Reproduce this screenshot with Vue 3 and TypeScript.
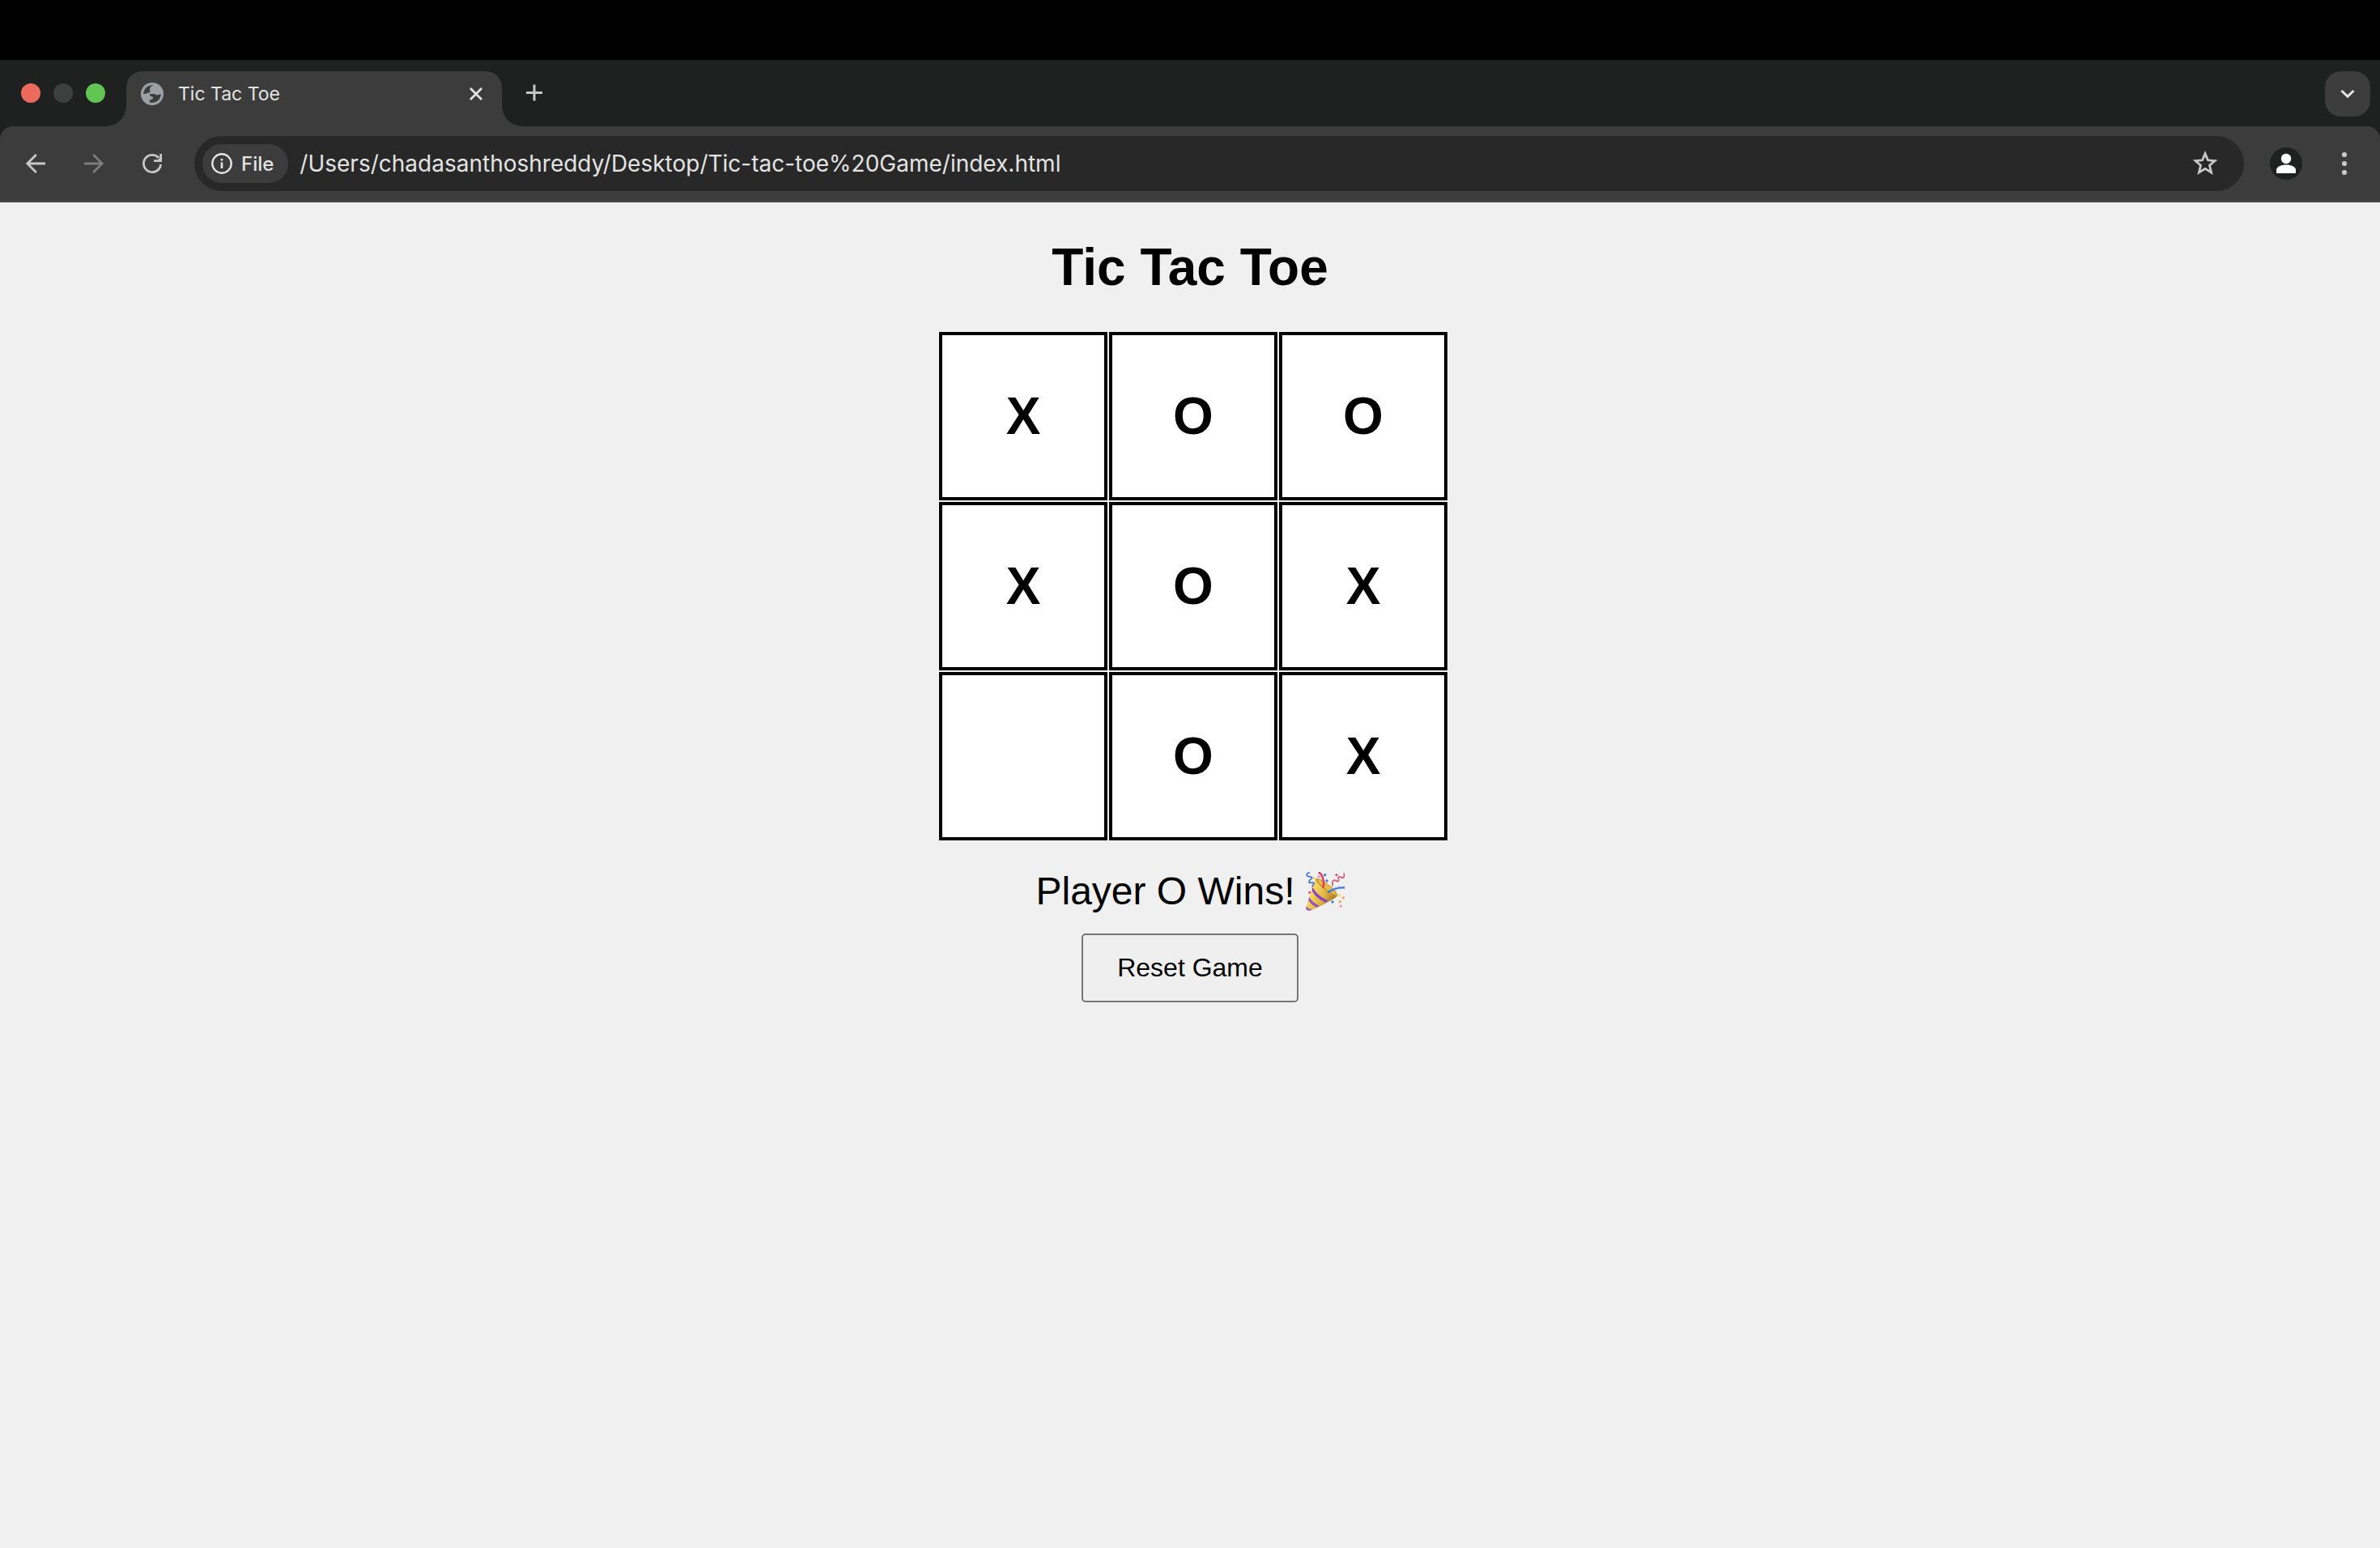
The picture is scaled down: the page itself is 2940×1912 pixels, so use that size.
<script setup lang="ts">
import { computed, ref } from 'vue'

type Mark = 'X' | 'O' | ''

const lines: number[][] = [
  [0, 1, 2], [3, 4, 5], [6, 7, 8],
  [0, 3, 6], [1, 4, 7], [2, 5, 8],
  [0, 4, 8], [2, 4, 6],
]

const address = ref('/Users/chadasanthoshreddy/Desktop/Tic-tac-toe%20Game/index.html')
const cells = ref<Mark[]>(['X', 'O', 'O', 'X', 'O', 'X', '', 'O', 'X'])
const turn = ref<'X' | 'O'>('X')

const winner = computed<Mark>(() => {
  for (const [a, b, c] of lines) {
    const mark = cells.value[a]
    if (mark && mark === cells.value[b] && mark === cells.value[c]) return mark
  }
  return ''
})

const status = computed(() => {
  if (winner.value) return `Player ${winner.value} Wins!`
  if (cells.value.every((c) => c)) return "It's a Draw!"
  return `Player ${turn.value}'s Turn`
})

function play(i: number) {
  if (cells.value[i] || winner.value) return
  cells.value[i] = turn.value
  turn.value = turn.value === 'X' ? 'O' : 'X'
}

function reset() {
  cells.value = Array<Mark>(9).fill('')
  turn.value = 'X'
}
</script>

<template>
  <div class="screen">
    <div class="menubar"></div>
    <header class="chrome">
      <div class="strip">
        <div class="lights">
          <button class="light close" aria-label="Close window"></button>
          <button class="light minimise" aria-label="Minimise window"></button>
          <button class="light zoom" aria-label="Zoom window"></button>
        </div>
        <div class="tab">
          <svg class="favicon" viewBox="0 0 28 28" aria-hidden="true">
            <circle cx="14" cy="14" r="14" fill="#9aa0a6" />
            <path fill="#3c3c3c" d="M16 3.300 C14 3.600 11.200 5.500 11 8 C10.700 10 12 10.600 11.400 11.700 C10.800 12.700 9 12 8 13 C7 13.800 5.500 14 3.200 14 C3.200 8 8 2.500 16 3.300Z" />
            <path fill="#3c3c3c" d="M11 14 H15 C18.500 14 19 15.800 20.300 15.500 C22 15 23 14.500 24.800 14.500 C24.500 20 20 24.800 14 24.800 C12.500 24.800 11.500 24.500 10.800 24.200 V21.500 C12.500 21 14.500 21 15 19 C15.500 17 12.500 17.500 11 16Z" />
          </svg>
          <span class="tab-title">Tic Tac Toe</span>
          <button class="icon small" aria-label="Close tab">
            <svg viewBox="0 0 32 32"><path d="M9 9 L23 23 M23 9 L9 23" stroke="#e3e3e3" stroke-width="2.800" /></svg>
          </button>
        </div>
        <button class="icon new-tab" aria-label="New tab">
          <svg viewBox="0 0 56 56"><path d="M18 26.500 H38 M28 16.500 V36.500" stroke="#c7c7c7" stroke-width="3" /></svg>
        </button>
        <button class="icon tab-search" aria-label="Search tabs">
          <svg viewBox="0 0 56 56"><path d="M20.500 24 L28 31.200 L35.500 24" stroke="#e3e3e3" stroke-width="3" fill="none" /></svg>
        </button>
      </div>
      <nav class="toolbar">
        <button class="icon" aria-label="Back">
          <svg viewBox="0 0 56 56"><path d="M40 28 H18 M28.800 17 L17.800 28 L28.800 39" stroke="#c7c7c7" stroke-width="2.800" fill="none" /></svg>
        </button>
        <button class="icon" aria-label="Forward">
          <svg viewBox="0 0 56 56"><path d="M16 28 H38 M27.200 17 L38.200 28 L27.200 39" stroke="#7c7c7c" stroke-width="2.800" fill="none" /></svg>
        </button>
        <button class="icon" aria-label="Reload">
          <svg viewBox="0 0 56 56">
            <path d="M38.600 29 A10.600 10.600 0 1 1 36 21" stroke="#c7c7c7" stroke-width="2.800" fill="none" />
            <path d="M40 16 V26 H30 V23.200 H37.200 V16Z" fill="#c7c7c7" />
            <path d="M38.500 20 V24.500 H34Z" fill="#c7c7c7" />
          </svg>
        </button>
        <div class="omnibox">
          <button class="chip">
            <svg viewBox="0 0 26 26" aria-hidden="true">
              <circle cx="13" cy="13" r="11.700" stroke="#e3e3e3" stroke-width="2.400" fill="none" />
              <path d="M13 11.500 V19 M13 7 V9.600" stroke="#e3e3e3" stroke-width="2.600" />
            </svg>
            <span>File</span>
          </button>
          <input v-model="address" class="address" type="text" aria-label="Address" spellcheck="false" />
          <button class="icon" aria-label="Bookmark this page">
            <svg viewBox="0 0 56 56"><path d="M28 15.600 L31.400 23.800 L40 24.600 L33.500 30.300 L35.600 39 L28 34.400 L20.400 39 L22.500 30.300 L16 24.600 L24.600 23.800Z" stroke="#c7c7c7" stroke-width="2.800" fill="none" /></svg>
          </button>
        </div>
        <button class="icon" aria-label="Profile">
          <svg viewBox="0 0 56 56">
            <circle cx="28" cy="28" r="20" fill="#1f2120" />
            <circle cx="28" cy="22" r="6.200" fill="#fff" />
            <path d="M16 40 V36 C16 32 22 29.600 28 29.600 S40 32 40 36 V40Z" fill="#fff" />
          </svg>
        </button>
        <button class="icon" aria-label="Menu">
          <svg viewBox="0 0 56 56" fill="#c7c7c7">
            <circle cx="28" cy="17" r="3.100" /><circle cx="28" cy="28" r="3.100" /><circle cx="28" cy="39" r="3.100" />
          </svg>
        </button>
      </nav>
    </header>

    <main class="page">
      <h1>Tic Tac Toe</h1>
      <div class="board">
        <button v-for="(mark, i) in cells" :key="i" class="cell" :aria-label="`Cell ${i + 1} ${mark}`" @click="play(i)">{{ mark }}</button>
      </div>
      <p class="status">
        <span>{{ status }}</span>
        <svg v-if="winner" class="popper" viewBox="38 48 144 144" role="img" aria-label="Party popper">
          <defs>
            <linearGradient id="gold" x1="0" y1="0" x2="1" y2="0.600">
              <stop offset="0" stop-color="#b98a2c" />
              <stop offset="0.350" stop-color="#f6d862" />
              <stop offset="0.650" stop-color="#e3b640" />
              <stop offset="1" stop-color="#9a6f22" />
            </linearGradient>
            <clipPath id="cone"><path d="M76 72 C92 84 132 112 154 137 C150 146 72 186 53 191 C44 193 37 188 39 181 C48 150 68 92 76 72Z" /></clipPath>
          </defs>
          <g clip-path="url(#cone)">
            <rect x="36" y="66" width="122" height="128" fill="url(#gold)" />
            <path d="M64 104 C76 128 94 142 122 154 L112 161 C86 150 70 136 60 114Z" fill="#8e45c4" />
            <path d="M50 140 C58 154 70 164 88 173 L78 179 C62 171 53 162 46 150Z" fill="#9650cc" />
            <path d="M40 174 C46 183 54 187 64 187 L54 194 H34Z" fill="#9c5fca" />
          </g>
          <path d="M76 72 C92 70 118 90 136 106 C150 119 157 130 154 137 C149 142 128 130 106 112 C88 97 73 81 76 72Z" fill="#c6942f" />
          <path d="M83 76 C98 78 116 91 130 104 C142 115 150 126 149 131 C140 132 118 117 104 105 C92 95 82 84 83 76Z" fill="#e5bd4b" />
          <g fill="none" stroke-linecap="round">
            <path d="M103 104 C106 84 102 60 88 51" stroke="#dc3559" stroke-width="8" />
            <path d="M102 96 C104 80 99 64 91 55" stroke="#f1708a" stroke-width="2" />
            <path d="M122 122 C138 112 154 104 180 106" stroke="#3f76da" stroke-width="8" />
            <path d="M132 114 C148 106 162 104 180 104" stroke="#79a8f2" stroke-width="2" />
            <path d="M52 51 C40 50 38 64 49 65 C58 66 66 68 58 74 C50 80 46 88 55 88 C66 86 72 88 66 94 L62 102" stroke="#4470d2" stroke-width="5" />
            <path d="M180 54 C184 68 174 72 168 67 C160 63 156 70 160 76 C162 84 154 84 148 79 C140 76 134 84 138 98" stroke="#d84468" stroke-width="5" />
            <path d="M167 68 C160 66 158 72 160 78 M146 79 C138 80 137 88 138 96" stroke="#f08ba3" stroke-width="3" />
          </g>
          <g fill="#3f7be0"><circle cx="109" cy="59" r="5" /><circle cx="116" cy="81" r="5" /><circle cx="137" cy="159" r="5" /></g>
          <g fill="#e2557c"><circle cx="152" cy="59" r="5" /><circle cx="52" cy="124" r="5" /></g>
          <g fill="#ef8fbc"><circle cx="86" cy="65" r="5" /><circle cx="168" cy="175" r="5" /></g>
          <g fill="#f6dd4c"><circle cx="69" cy="72" r="5" /><circle cx="162" cy="135" r="5" /></g>
          <g fill="#f0a858"><circle cx="177" cy="144" r="5" /><circle cx="165" cy="158" r="5" /></g>
        </svg>
      </p>
      <button class="reset" @click="reset">Reset Game</button>
    </main>
  </div>
</template>

<style>
body {
  margin: 0;
  background: #f0f0f0;
}
</style>

<style scoped>
.screen {
  min-height: 100vh;
  background: #f0f0f0;
  font-family: "Liberation Sans", Arial, sans-serif;
}

button {
  margin: 0;
  padding: 0;
  border: 0;
  background: none;
  color: inherit;
  font: inherit;
}

svg {
  display: block;
}

.menubar {
  height: 74px;
  background: #000;
}

.chrome {
  background: #1f2120;
  color: #e3e3e3;
  font-family: Inter, sans-serif;
}

.strip {
  display: flex;
  align-items: center;
  padding: 14px 12px 0 26px;
}

.lights {
  display: flex;
  gap: 16px;
  margin: 0 26px 14px 0;
}

.light {
  width: 24px;
  height: 24px;
  border-radius: 50%;
}

.light.close { background: #ec6a5e; }
.light.minimise { background: #3e403f; }
.light.zoom { background: #61c554; }

.tab {
  position: relative;
  display: flex;
  align-items: center;
  box-sizing: border-box;
  width: 464px;
  height: 68px;
  padding: 0 16px 12px 18px;
  border-radius: 20px 20px 0 0;
  background: #3c3c3c;
}

.tab::before,
.tab::after {
  content: "";
  position: absolute;
  bottom: 0;
  width: 24px;
  height: 24px;
}

.tab::before {
  right: 100%;
  background: radial-gradient(circle at 0 0, transparent 23px, #3c3c3c 24px);
}

.tab::after {
  left: 100%;
  background: radial-gradient(circle at 100% 0, transparent 23px, #3c3c3c 24px);
}

.favicon {
  width: 28px;
  height: 28px;
  margin-right: 18px;
}

.tab-title {
  flex: 1;
  font-size: 23px;
  line-height: 32px;
}

.icon {
  flex: none;
  width: 56px;
  height: 56px;
}

.icon.small {
  width: 32px;
  height: 32px;
}

.new-tab {
  margin: 0 0 12px 12px;
}

.tab-search {
  margin: 0 0 12px auto;
  border-radius: 20px;
  background: #3c3c3c;
}

.toolbar {
  display: flex;
  align-items: center;
  gap: 16px;
  padding: 12px 16px;
  border-bottom: 2px solid #484648;
  border-radius: 16px 16px 0 0;
  background: #3c3c3c;
}

.omnibox {
  flex: 1;
  display: flex;
  align-items: center;
  box-sizing: border-box;
  height: 68px;
  margin: 0 8px;
  padding: 0 20px 0 10px;
  border-radius: 34px;
  background: #282828;
}

.chip {
  display: flex;
  align-items: center;
  gap: 11px;
  height: 48px;
  padding: 0 18px 0 11px;
  border-radius: 24px;
  background: #3c3c3c;
  font-size: 24px;
  font-weight: 500;
}

.chip svg {
  width: 26px;
  height: 26px;
}

.address {
  flex: 1;
  min-width: 0;
  height: 48px;
  margin: 0 0 0 14px;
  padding: 0;
  border: 0;
  outline: 0;
  background: none;
  color: #e3e3e3;
  font-family: Inter, sans-serif;
  font-size: 28px;
}

.page {
  display: flex;
  flex-direction: column;
  align-items: center;
  color: #000;
}

h1 {
  margin: 43px 0;
  font-size: 64px;
  line-height: 74px;
}

.board {
  display: grid;
  grid-template-columns: repeat(3, 208px);
  grid-auto-rows: 208px;
  gap: 2px;
  width: 620px;
}

.cell {
  border: 4px solid #000;
  background: #fff;
  font-size: 64px;
  font-weight: bold;
}

.status {
  display: flex;
  align-items: center;
  gap: 13px;
  margin: 35px 0 24px;
  font-size: 48px;
  line-height: 56px;
}

.popper {
  width: 48px;
  height: 48px;
}

.reset {
  padding: 22px 42px;
  border: 2px solid #767676;
  border-radius: 5px;
  background: #efefef;
  font-size: 32px;
  line-height: 37px;
}
</style>
